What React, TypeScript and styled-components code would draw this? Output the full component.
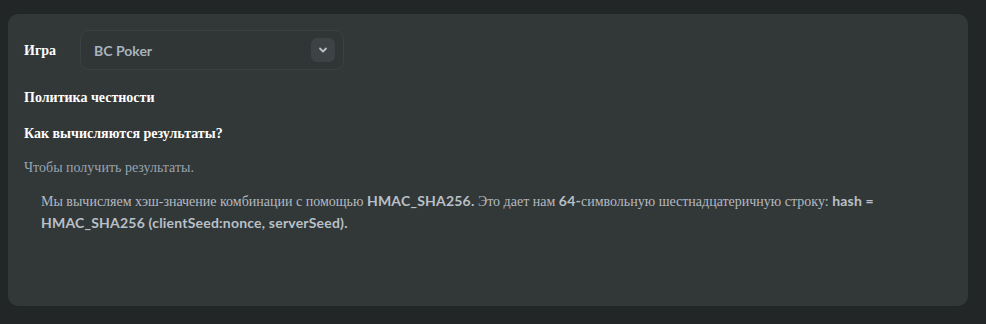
import React from "react";
import styled, { createGlobalStyle } from "styled-components";

const Global = createGlobalStyle`
  html, body { margin: 0; padding: 0; background: #232627; }
  body { font-family: "Liberation Serif", "Times New Roman", serif; }
  #root { padding: 14px 18px 18px 8px; }
`;

const Panel = styled.div`
  box-sizing: border-box;
  width: 960px;
  height: 292px;
  background: #323738;
  border-radius: 10px;
  padding: 16px 16px;
  color: #ffffff;
  font-size: 14px;
`;

const Row = styled.div`
  display: flex;
  align-items: center;
`;

const Label = styled.div`
  width: 56px;
  font-weight: bold;
  font-size: 14px;
  line-height: 20px;
  padding-top: 1px;
  color: #ffffff;
`;

const Select = styled.div`
  box-sizing: border-box;
  width: 264px;
  height: 40px;
  border: 1px solid #3b4042;
  border-radius: 9px;
  background: #303536;
  display: flex;
  align-items: center;
  justify-content: space-between;
  padding: 0 8px 0 13px;
`;

const SelectText = styled.span`
  font-family: Lato, "Liberation Sans", sans-serif;
  font-weight: bold;
  font-size: 14px;
  color: #a9b3bd;
`;

const ArrowBtn = styled.div`
  width: 24px;
  height: 24px;
  border-radius: 6px;
  background: #3d4245;
  display: flex;
  align-items: center;
  justify-content: center;
  color: #b8c0c8;
`;

const Title = styled.div<{ $mt: number }>`
  margin-top: ${(p) => p.$mt}px;
  font-weight: bold;
  font-size: 14px;
  line-height: 20px;
  color: #ffffff;
`;

const Muted = styled.div`
  margin-top: 14px;
  font-size: 14px;
  line-height: 20px;
  color: #99a4b0;
`;

const Para = styled.p`
  margin: 12px 0 0 0;
  padding-left: 17px;
  font-size: 14px;
  line-height: 21px;
  color: #b3bac1;
`;

const Latin = styled.span`
  font-family: Lato, "Liberation Sans", sans-serif;
  font-weight: 700;
  letter-spacing: 0.2px;
  color: #b9c0c7;
`;

export default function App() {
  return (
    <>
      <Global />
      <Panel>
        <Row>
          <Label>Игра</Label>
          <Select>
            <SelectText>BC Poker</SelectText>
            <ArrowBtn>
              <svg width="10" height="8" viewBox="0 0 10 8" fill="none">
                <path d="M2 2.5 L5 5.5 L8 2.5" stroke="currentColor" strokeWidth="1.8" strokeLinecap="round" strokeLinejoin="round" />
              </svg>
            </ArrowBtn>
          </Select>
        </Row>
        <Title $mt={18}>Политика честности</Title>
        <Title $mt={16}>Как вычисляются результаты?</Title>
        <Muted>Чтобы получить результаты.</Muted>
        <Para>
          Мы вычисляем хэш-значение комбинации с помощью <Latin>HMAC_SHA256.</Latin> Это дает нам{" "}
          <Latin>64-</Latin>символьную шестнадцатеричную строку: <Latin>hash = HMAC_SHA256 (clientSeed:nonce, serverSeed).</Latin>
        </Para>
      </Panel>
    </>
  );
}
